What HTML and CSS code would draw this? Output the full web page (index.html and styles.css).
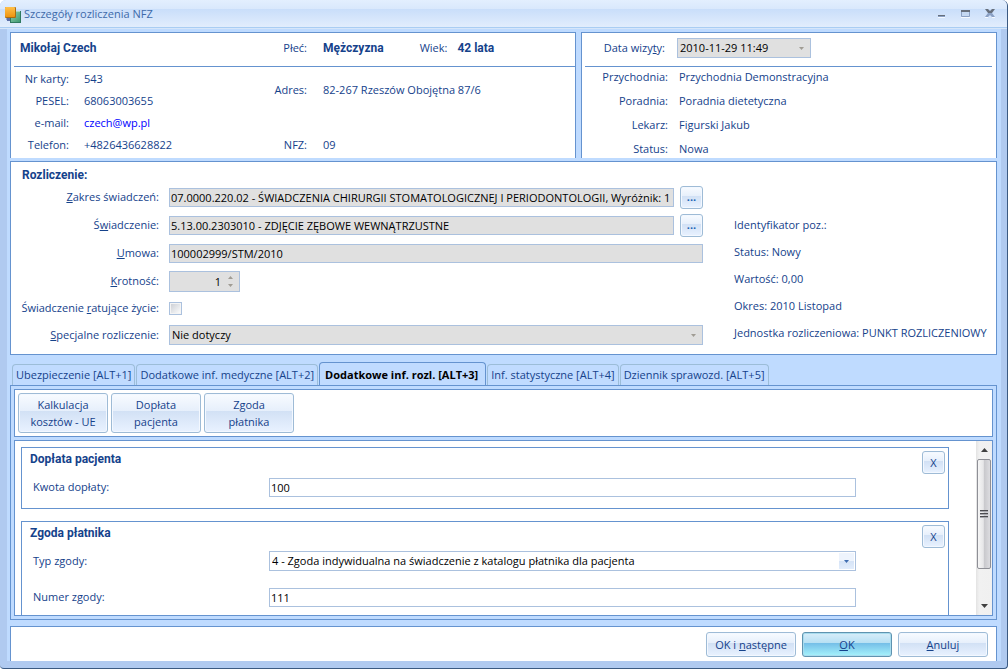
FILE: index.html
```html
<!DOCTYPE html>
<html lang="pl">
<head>
<meta charset="utf-8">
<title>Szczegóły rozliczenia NFZ</title>
<link rel="stylesheet" href="styles.css">
</head>
<body>
<div class="window">
  <header class="titlebar">
    <svg class="app-icon" width="16" height="16" viewBox="0 0 16 16" aria-hidden="true">
      <defs>
        <linearGradient id="orange" x1="0" y1="0" x2="0" y2="1"><stop offset="0" stop-color="#ffc04a"/><stop offset="1" stop-color="#ee9410"/></linearGradient>
        <linearGradient id="green" x1="0" y1="0" x2="1" y2="1"><stop offset="0" stop-color="#8fceae"/><stop offset="1" stop-color="#3f9a72"/></linearGradient>
      </defs>
      <rect x="2" y="11" width="3" height="3" fill="#5b6fa8"/>
      <rect x="1" y="11" width="1" height="2" fill="#93a5cc"/>
      <rect x="5" y="4" width="11" height="12" fill="#2f7a60"/>
      <rect x="6" y="5" width="9" height="10" fill="url(#green)"/>
      <rect x="11" y="4" width="4" height="1" fill="#a9d8c0"/>
      <rect x="0" y="0" width="11" height="11" rx="1" fill="#a86c14"/>
      <rect x="0" y="0" width="10" height="10" rx="1" fill="url(#orange)"/>
    </svg>
    <h1 class="titlebar-text">Szczegóły rozliczenia NFZ</h1>
    <div class="window-controls">
      <button class="window-button" aria-label="Minimalizuj"><svg width="9" height="10" viewBox="0 0 9 10"><path d="M1 7h7v1H1z" fill="#666f7c"/><path d="M1 8h7v1H1z" fill="#8aa0c4"/><path d="M1 9h7v1H1z" fill="#f4f9ff"/></svg></button>
      <button class="window-button" aria-label="Maksymalizuj"><svg width="9" height="10" viewBox="0 0 9 10"><path d="M0 2h9v2H0z" fill="#666f7c"/><path d="M.5 4v4.500h8V4" fill="#c4d8f2" stroke="#8aa0c4"/><path d="M0 9h9v1H0z" fill="#f4f9ff"/></svg></button>
      <button class="window-button" aria-label="Zamknij"><svg width="10" height="10" viewBox="0 0 10 10"><path d="M0 1h3l2 2 2-2h3L7 5H3z" fill="#666f7c"/><path d="M3 5h4l3 4H7L5 7 3 9H0z" fill="#8aa0c4"/><path d="M0 9h3v1H0zM7 9h3v1H7z" fill="#f4f9ff"/></svg></button>
    </div>
  </header>

  <main class="body">
    <div class="summary">
      <section class="panel open-panel">
        <div class="patient-grid patient-head">
          <strong class="patient-name">Mikołaj Czech</strong>
          <span class="label">Płeć:</span>
          <div class="patient-sex"><strong>Mężczyzna</strong><span class="label">Wiek:</span><strong>42 lata</strong></div>
        </div>
        <div class="patient-columns">
          <div class="patient-data">
            <span class="label">Nr karty:</span><span>543</span>
            <span class="label">PESEL:</span><span>68063003655</span>
            <span class="label">e-mail:</span><a class="mail" href="mailto:czech@wp.pl">czech@wp.pl</a>
            <span class="label">Telefon:</span><span>+4826436628822</span>
          </div>
          <div class="patient-data patient-address">
            <span class="label">Adres:</span><span>82-267 Rzeszów Obojętna 87/6</span>
            <span class="label">NFZ:</span><span>09</span>
          </div>
        </div>
      </section>
      <section class="panel open-panel">
        <div class="visit-grid visit-head">
          <label class="label visit-label" for="visit-date">Data wizy<u>t</u>y:</label>
          <span class="combo visit-date">
            <select class="field disabled" id="visit-date" disabled><option>2010-11-29 11:49</option></select>
            <svg class="arrow" width="5" height="3" viewBox="0 0 5 3"><path d="M0 0h5L2.500 3z" fill="#a09c94"/></svg>
          </span>
        </div>
        <div class="visit-grid visit-data">
          <span class="label">Przychodnia:</span><span>Przychodnia Demonstracyjna</span>
          <span class="label">Poradnia:</span><span>Poradnia dietetyczna</span>
          <span class="label">Lekarz:</span><span>Figurski Jakub</span>
          <span class="label">Status:</span><span>Nowa</span>
        </div>
      </section>
    </div>

    <section class="panel billing">
      <div>
        <h2 class="heading billing-title">Rozliczenie:</h2>
        <div class="billing-form">
          <label class="label" for="scope"><u>Z</u>akres świadczeń:</label>
          <div class="control"><input class="field disabled" id="scope" readonly value="07.0000.220.02 - ŚWIADCZENIA CHIRURGII STOMATOLOGICZNEJ I PERIODONTOLOGII, Wyróżnik: 1"><button class="button small dots" aria-label="Wybierz zakres">...</button></div>
          <label class="label" for="service">Ś<u>w</u>iadczenie:</label>
          <div class="control"><input class="field disabled" id="service" readonly value="5.13.00.2303010 - ZDJĘCIE ZĘBOWE WEWNĄTRZUSTNE"><button class="button small dots" aria-label="Wybierz świadczenie">...</button></div>
          <label class="label" for="contract"><u>U</u>mowa:</label>
          <div class="control"><input class="field disabled" id="contract" readonly value="100002999/STM/2010"></div>
          <label class="label" for="count"><u>K</u>rotność:</label>
          <div class="control"><span class="combo spinner">
            <input class="field disabled number" id="count" readonly value="1">
            <svg class="arrow" width="5" height="11" viewBox="0 0 5 11"><path d="M0 3h5L2.500 0zM0 8h5L2.500 11z" fill="#a09c94"/></svg>
          </span></div>
          <label class="label" for="saving">Świadczenie <u>r</u>atujące życie:</label>
          <div class="control"><input class="check" type="checkbox" id="saving"></div>
          <label class="label" for="special"><u>S</u>pecjalne rozliczenie:</label>
          <div class="control"><span class="combo grow">
            <select class="field disabled" id="special" disabled><option>Nie dotyczy</option></select>
            <svg class="arrow" width="5" height="3" viewBox="0 0 5 3"><path d="M0 0h5L2.500 3z" fill="#a09c94"/></svg>
          </span></div>
        </div>
      </div>
      <div class="billing-info">
        <span>Identyfikator poz.:</span>
        <span>Status: Nowy</span>
        <span>Wartość: 0,00</span>
        <span>Okres: 2010 Listopad</span>
        <span>Jednostka rozliczeniowa: PUNKT ROZLICZENIOWY</span>
      </div>
    </section>

    <div class="tabs" role="tablist">
      <button class="tab" role="tab">Ubezpieczenie [ALT+1]</button>
      <button class="tab" role="tab">Dodatkowe inf. medyczne [ALT+2]</button>
      <button class="tab active" role="tab" aria-selected="true">Dodatkowe inf. rozl. [ALT+3]</button>
      <button class="tab" role="tab">Inf. statystyczne [ALT+4]</button>
      <button class="tab" role="tab">Dziennik sprawozd. [ALT+5]</button>
    </div>

    <section class="tab-page" role="tabpanel">
      <div class="panel toolbar">
        <button class="button tool">Kalkulacja<br>kosztów - UE</button>
        <button class="button tool">Dopłata<br>pacjenta</button>
        <button class="button tool">Zgoda<br>płatnika</button>
      </div>
      <div class="panel scroller">
        <div class="groups">
          <section class="panel group">
            <div class="group-head"><h2 class="heading">Dopłata pacjenta</h2><button class="button small" aria-label="Usuń dopłatę">X</button></div>
            <div class="group-row"><label for="amount">Kwota dopłaty:</label><input class="field" id="amount" value="100"></div>
          </section>
          <section class="panel group">
            <div class="group-head"><h2 class="heading">Zgoda płatnika</h2><button class="button small" aria-label="Usuń zgodę">X</button></div>
            <div class="group-row"><label for="consent">Typ zgody:</label>
              <span class="combo">
                <select class="field" id="consent"><option>4 - Zgoda indywidualna na świadczenie z katalogu płatnika dla pacjenta</option></select>
                <span class="drop"><svg width="5" height="3" viewBox="0 0 5 3"><path d="M0 0h5L2.500 3z" fill="#3f6db0"/></svg></span>
              </span>
            </div>
            <div class="group-row"><label for="number">Numer zgody:</label><input class="field" id="number" value="111"></div>
          </section>
        </div>
        <div class="scrollbar" aria-hidden="true">
          <svg class="scroll-arrow" width="7" height="4" viewBox="0 0 7 4"><path d="M0 4h7L3.500 0z" fill="#404040"/></svg>
          <div class="track"><div class="thumb"><svg width="8" height="9" viewBox="0 0 8 9"><path d="M0 .5h8M0 3.500h8M0 6.500h8" stroke="#4c4c50"/><path d="M0 1.500h8M0 4.500h8M0 7.500h8" stroke="#a8a8ae"/></svg></div></div>
          <svg class="scroll-arrow" width="7" height="4" viewBox="0 0 7 4"><path d="M0 0h7L3.500 4z" fill="#404040"/></svg>
        </div>
      </div>
    </section>

    <footer class="panel open-panel footer">
      <button class="button action">OK i <u>n</u>astępne</button>
      <button class="button action default"><u>O</u>K</button>
      <button class="button action"><u>A</u>nuluj</button>
    </footer>
  </main>
</div>
</body>
</html>
```
FILE: styles.css
```css
* {
  box-sizing: border-box;
}

body {
  margin: 0;
  height: 100vh;
  padding-bottom: 2px;
  background: #fff;
  color: #15428b;
  font: 11px/16px "Open Sans", "Noto Sans", sans-serif;
}

button,
input,
select {
  margin: 0;
  color: inherit;
  font: inherit;
}

h1,
h2 {
  margin: 0;
  font: inherit;
}

strong,
.heading {
  font: bold 12px/16px Roboto, "Liberation Sans", sans-serif;
}

.window {
  display: flex;
  flex-direction: column;
  height: 100%;
  border: solid #3b5a82;
  border-width: 0 1px 1px 0;
  border-radius: 6px 6px 4px 4px;
  background: #b0caf0;
  overflow: hidden;
}

.titlebar {
  display: flex;
  align-items: center;
  gap: 3px;
  height: 29px;
  padding: 0 12px 0 5px;
  border-bottom: 1px solid #d6e6fa;
  box-shadow: inset 0 -1px #a9cdf3;
  background: linear-gradient(#e3effe 0, #d9e8fc 9px, #c9defa 9px, #e3eefd 28px);
}

.app-icon {
  margin-top: 2px;
}

.titlebar-text {
  color: #3e6aaa;
}

.window-controls {
  display: flex;
  gap: 15px;
  margin: 0 0 2px auto;
}

.window-button {
  display: block;
  padding: 0;
  border: 0;
  background: none;
}

.window-button svg {
  display: block;
}

.body {
  display: flex;
  flex-direction: column;
  flex: 1;
  min-height: 0;
  margin: 0 6px 7px 7px;
  padding: 3px 4px 0 3px;
  background: #bfdbff;
}

.panel {
  border: 1px solid #6593cf;
  background: #fff;
}

.open-panel {
  border-bottom: 0;
}

.label {
  text-align: right;
  white-space: nowrap;
}

.summary {
  display: grid;
  grid-template-columns: 566fr 416fr;
  gap: 5px;
  margin-bottom: 3px;
}

.patient-grid {
  display: grid;
  grid-template-columns: 241px 36px 1fr;
  column-gap: 16px;
  align-items: center;
}

.patient-head,
.visit-head {
  height: 34px;
  margin-left: 3px;
  padding-bottom: 3px;
  border-bottom: 1px solid #6593cf;
}

.patient-name {
  padding-left: 6px;
}

.patient-sex {
  display: flex;
  gap: 10px;
}

.patient-sex .label {
  margin-left: 26px;
}

.patient-columns {
  display: grid;
  grid-template-columns: 244px 1fr;
  column-gap: 16px;
  padding: 1px 0 2px;
}

.patient-data {
  display: grid;
  grid-template-columns: 58px 1fr;
  grid-auto-rows: 22px;
  column-gap: 15px;
  align-items: center;
}

.patient-address {
  grid-template-columns: 36px 1fr;
  grid-template-rows: 44px 22px;
  column-gap: 16px;
  align-content: space-between;
}

.mail {
  color: #00f;
  text-decoration: none;
}

.visit-grid {
  display: grid;
  grid-template-columns: 86px 1fr;
  column-gap: 11px;
  align-items: center;
}

.visit-head {
  grid-template-columns: 80px 1fr;
  margin-right: 4px;
  column-gap: 12px;
}

.visit-date {
  width: 134px;
}

.visit-data {
  grid-auto-rows: 19px;
  row-gap: 5px;
}

.field {
  width: 100%;
  height: 19px;
  padding: 0 1px;
  border: 1px solid #abc1de;
  border-radius: 0;
  background: #fff;
  color: #000;
  appearance: none;
  outline: 0;
}

select.field {
  height: 20px;
  padding: 0 2px;
  opacity: 1;
}

.field.disabled {
  background: #e0e0e0;
}

.combo {
  display: block;
  position: relative;
}

.arrow {
  position: absolute;
  top: 0;
  right: 7px;
  bottom: 0;
  margin: auto 0;
}

.drop {
  display: flex;
  position: absolute;
  top: 2px;
  right: 2px;
  bottom: 2px;
  width: 15px;
  align-items: center;
  justify-content: center;
  background: linear-gradient(#eef4fd 50%, #d5e3f6 50%, #e2edfc);
  pointer-events: none;
}

.grow {
  flex: 1;
}

.billing {
  display: grid;
  grid-template-columns: 692fr 262fr;
  column-gap: 31px;
  padding: 5px 0;
}

.billing-title {
  padding-left: 11px;
}

.billing-form {
  display: grid;
  grid-template-columns: 148px 1fr;
  grid-template-rows: 28px 28px 28px 28px 26px 28px;
  column-gap: 10px;
  align-items: center;
}

.control {
  display: flex;
  align-items: center;
  gap: 6px;
}

.spinner {
  width: 71px;
}

.field.number {
  height: 21px;
  padding-right: 18px;
  text-align: right;
}

.check {
  width: 13px;
  height: 13px;
  border: 1px solid #abc1de;
  background: linear-gradient(135deg, #c9ccd2, #fff);
  box-shadow: inset 0 0 0 1px #f4f4f4;
  appearance: none;
}

.billing-info {
  display: grid;
  grid-auto-rows: 27px;
  align-items: center;
  padding-top: 44px;
  white-space: nowrap;
}

.button {
  flex: none;
  padding: 0;
  border: 1px solid #9ebbd6;
  border-radius: 3px;
  background: linear-gradient(#f8fbff 0, #e6effb 45%, #d2e1f5 45%, #e9f2ff 100%);
  box-shadow: inset 0 0 0 1px #f3f8ff;
  text-align: center;
}

.small {
  width: 23px;
  height: 23px;
  line-height: 20px;
}

.dots {
  color: #1b62b5;
  font-weight: bold;
}

.tabs {
  display: flex;
  align-items: flex-end;
  gap: 1px;
  height: 30px;
  padding-left: 2px;
}

.tab {
  height: 21px;
  padding: 0 3px;
  border: 1px solid #9cbdd8;
  border-bottom: 0;
  border-radius: 4px 4px 0 0;
  background: #c0dbff;
  white-space: nowrap;
}

.tab.active {
  height: 23px;
  padding: 1px 7px 0 5px;
  border-color: #6593cf;
  color: #000;
  font-weight: bold;
}

.tab-page {
  display: flex;
  flex-direction: column;
  flex: 1;
  gap: 3px;
  min-height: 0;
  padding: 3px;
  border: 1px solid #6593cf;
}

.toolbar {
  display: flex;
  gap: 3px;
  padding: 3px;
}

.tool {
  width: 90px;
  height: 40px;
  line-height: 17px;
}

.scroller {
  display: flex;
  flex: 1;
  min-height: 0;
}

.groups {
  display: flex;
  flex: 1;
  flex-direction: column;
  gap: 12px;
  padding: 6px 27px 0 6px;
  overflow: hidden;
}

.group {
  flex: none;
  padding: 3px 3px 8px 8px;
}

.group-head {
  display: flex;
  justify-content: space-between;
}

.group-row {
  display: grid;
  grid-template-columns: 236px 1fr;
  align-items: center;
  height: 26px;
  padding: 0 89px 0 3px;
}

.group-row + .group-row {
  margin-top: 10px;
}

.scrollbar {
  display: flex;
  flex-direction: column;
  align-items: center;
  width: 16px;
  padding: 7px 1px;
  background: linear-gradient(90deg, #e3e3e3, #f1f1f1 20%, #f0f0f0);
}

.scroll-arrow {
  flex: none;
}

.track {
  flex: 1;
  width: 100%;
  padding: 7px 0;
}

.thumb {
  display: flex;
  align-items: center;
  justify-content: center;
  height: 80%;
  border: 1px solid #8e8f96;
  border-radius: 2px;
  background: linear-gradient(90deg, #f6f6f6 0, #e6e6e8 45%, #c8c8cc 50%, #dcdce0 100%);
}

.footer {
  display: flex;
  justify-content: flex-end;
  gap: 6px;
  height: 35px;
  margin-top: 6px;
  padding: 5px 8px 0 0;
}

.action {
  width: 90px;
  height: 25px;
}

.default {
  border-color: #5f93b0;
  background: linear-gradient(#d8eefa 0, #b5dff3 45%, #75bfe8 45%, #a6f3fc 100%);
  box-shadow: inset 0 0 0 1px #a8dcee;
}
```
